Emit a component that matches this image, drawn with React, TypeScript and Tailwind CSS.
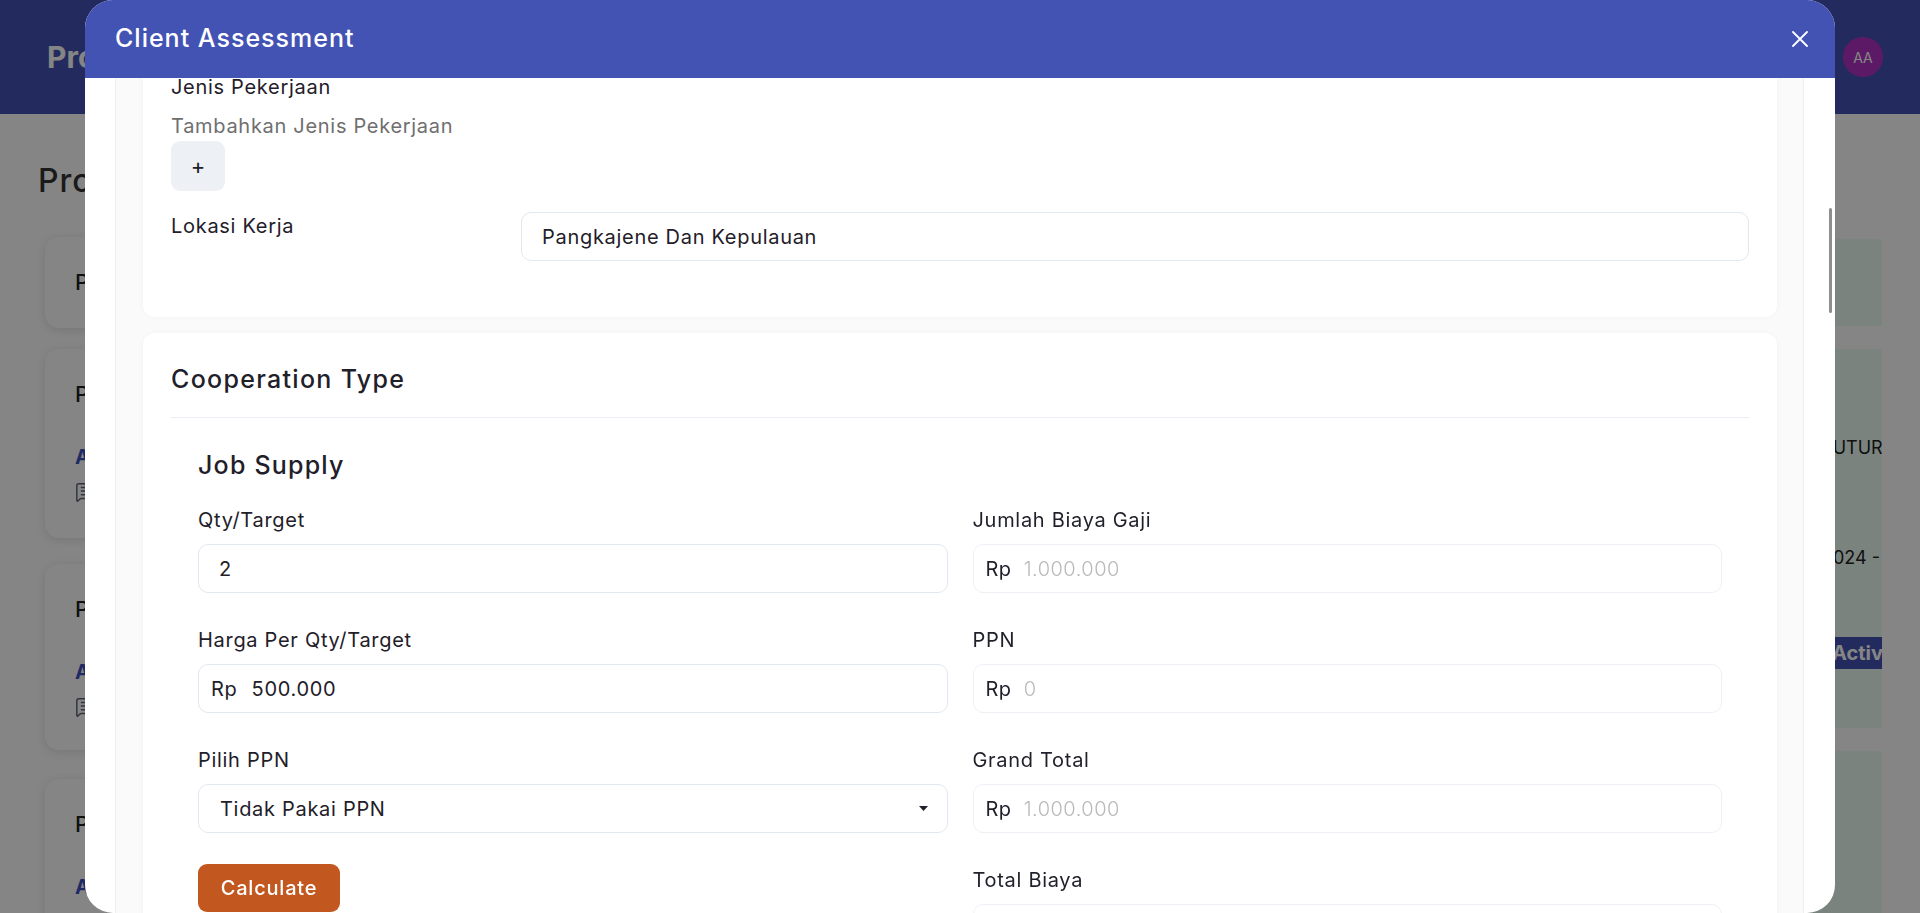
import React from "react";
import { MessageSquareText } from "lucide-react";

const FONT = "font-['Inter','Noto_Sans',sans-serif]";

function Label({ children }: { children: React.ReactNode }) {
  return (
    <div className="mb-[10px] text-[20px] leading-[28px] tracking-[0.7px] text-[#1f2029]">
      {children}
    </div>
  );
}

function TextInput({ value }: { value: string }) {
  return (
    <div className="flex h-[49px] items-center rounded-[10px] border border-[#e2e8f0] bg-white px-[20px] text-[20px] tracking-[0.7px] text-[#1f2029]">
      {value}
    </div>
  );
}

function MoneyInput({
  value,
  muted,
}: {
  value: string;
  muted?: boolean;
}) {
  return (
    <div
      className={
        muted
          ? "flex h-[49px] items-center gap-[12px] rounded-[10px] border border-[#edf0f5] bg-white pl-[12px] text-[20px] tracking-[0.5px]"
          : "flex h-[49px] items-center gap-[14px] rounded-[10px] border border-[#e2e8f0] bg-white pl-[12px] text-[20px] tracking-[0.7px]"
      }
    >
      <span className="text-[#1f2029]">Rp</span>
      <span className={muted ? "font-light text-[#b9b9b9]" : "text-[#1f2029]"}>
        {value}
      </span>
    </div>
  );
}

function LeftCard({
  title,
  link,
  h,
}: {
  title: string;
  link?: string;
  h: string;
}) {
  return (
    <div className={`${h} rounded-[14px] bg-white pl-[30px] pt-[30px] shadow-[0_2px_10px_rgba(0,0,0,0.12)]`}>
      <div className="text-[22px] font-medium leading-[30px] text-[#222]">{title}</div>
      {link && (
        <>
          <div className="mt-[34px] text-[20px] font-bold leading-[28px] text-[#3d4fc0]">
            {link}
          </div>
          <MessageSquareText className="mt-[10px] h-[22px] w-[22px] text-[#5b6478]" strokeWidth={1.6} />
        </>
      )}
    </div>
  );
}

function Backdrop() {
  return (
    <div className="h-[913px] overflow-hidden bg-white">
      <nav className="flex h-[114px] items-center justify-between bg-[#4353b4] pl-[47px] pr-[37px]">
        <span className="text-[30px] font-bold text-white">ProHire</span>
        <div className="flex h-[40px] w-[40px] items-center justify-center rounded-full bg-[#b132c4] text-[14px] text-white">
          AA
        </div>
      </nav>
      <main className="px-[38px] pt-[47px]">
        <h1 className="text-[32px] font-medium leading-[40px] tracking-[1px] text-[#333]">
          Project List
        </h1>
        <div className="mt-[36px] flex gap-[24px]">
          <div className="flex flex-1 flex-col pl-[7px]">
            <LeftCard title="Project Overview" h="h-[91px]" />
            <div className="mt-[21px]">
              <LeftCard title="PT Sinar Jaya" link="Assessment" h="h-[189px]" />
            </div>
            <div className="mt-[26px]">
              <LeftCard title="PT Maju Bersama" link="Assessment" h="h-[186px]" />
            </div>
            <div className="mt-[29px]">
              <LeftCard title="PT Karya Abadi" link="Assessment" h="h-[186px]" />
            </div>
          </div>
          <div className="flex w-[380px] shrink-0 flex-col pt-[2px]">
            <div className="h-[87px] bg-[#ecfcf4]" />
            <div className="mt-[23px] h-[379px] overflow-hidden whitespace-nowrap bg-[#ecfcf4] pl-[320px] pt-[85px] text-[18px] text-[#222]">
              <div className="leading-[28px]">FUTURE TECH</div>
              <div className="mt-[82px] leading-[28px]">2024 - 2025</div>
              <div className="-ml-[6px] mt-[65px] inline-flex h-[32px] items-center bg-[#4353b4] px-[16px] text-[20px] font-bold text-white">
                Active
              </div>
            </div>
            <div className="mt-[23px] h-[200px] bg-[#ecfcf4]" />
          </div>
        </div>
      </main>
    </div>
  );
}

export default function App() {
  return (
    <div className={`relative h-[913px] w-full overflow-hidden ${FONT}`}>
      <Backdrop />
      <div className="fixed inset-0 z-10 bg-black/[0.48]" />
      <div className="fixed inset-0 z-20 flex justify-center px-[85px]">
        <div className="flex h-[913px] w-full flex-col overflow-hidden rounded-[28px] bg-white">
          <header className="flex h-[78px] shrink-0 items-center justify-between bg-[#4353b4] pl-[30px] pr-[27px]">
            <h2 className="text-[25px] font-medium tracking-[1px] text-white">
              Client Assessment
            </h2>
            <svg width="16" height="16" viewBox="0 0 16 16" fill="none" stroke="white" strokeWidth="1.8" strokeLinecap="round">
              <path d="M1 1 15 15M15 1 1 15" />
            </svg>
          </header>
          <div className="relative flex-1 overflow-hidden pl-[30px] pr-[31px]">
            <div className="-mt-[61px] border-x border-[#efefef] bg-[#fafafa] pl-[27px] pr-[26px] pt-[28px]">
              {/* Card 1 */}
              <div className="rounded-[12px] bg-white px-[28px] pb-[56px] pt-[28px] shadow-[0_0_6px_rgba(0,0,0,0.03)]">
                <div className="text-[20px] leading-[28px] tracking-[0.7px] text-[#1f2029]">
                  Jenis Pekerjaan
                </div>
                <div className="mt-[11px] text-[20px] leading-[28px] tracking-[0.7px] text-[#6f6f6f]">
                  Tambahkan Jenis Pekerjaan
                </div>
                <button className="mt-[1px] flex h-[50px] w-[54px] items-center justify-center rounded-[9px] bg-[#edf1f6] text-[22px] text-[#1f2029]">
                  +
                </button>
                <div className="mt-[21px] flex items-start">
                  <div className="w-[350px] text-[20px] leading-[28px] tracking-[0.7px] text-[#1f2029]">
                    Lokasi Kerja
                  </div>
                  <div className="flex-1">
                    <TextInput value="Pangkajene Dan Kepulauan" />
                  </div>
                </div>
              </div>

              {/* Card 2 */}
              <div className="mt-[16px] h-[700px] rounded-[12px] bg-white px-[28px] pt-[28px] shadow-[0_0_6px_rgba(0,0,0,0.03)]">
                <div className="border-b border-[#eceef3] pb-[20px] text-[25px] font-medium leading-[36px] tracking-[1.3px] text-[#1f2029]">
                  Cooperation Type
                </div>
                <div className="px-[27px] pt-[31px]">
                  <div className="text-[25px] font-medium leading-[32px] tracking-[1.2px] text-[#1f2029]">
                    Job Supply
                  </div>
                  <div className="mt-[25px] grid grid-cols-2 gap-x-[25px]">
                    <div className="flex flex-col gap-[33px]">
                      <div>
                        <Label>Qty/Target</Label>
                        <TextInput value="2" />
                      </div>
                      <div>
                        <Label>Harga Per Qty/Target</Label>
                        <MoneyInput value="500.000" />
                      </div>
                      <div>
                        <Label>Pilih PPN</Label>
                        <div className="flex h-[49px] items-center justify-between rounded-[10px] border border-[#e2e8f0] bg-white pl-[21px] pr-[19px] text-[20px] tracking-[0.7px] text-[#1f2029]">
                          <span>Tidak Pakai PPN</span>
                          <svg width="9" height="5" viewBox="0 0 9 5">
                            <path d="M0 0H9L4.5 5Z" fill="#1f2029" />
                          </svg>
                        </div>
                      </div>
                      <button className="-mt-[2px] flex h-[48px] w-[142px] items-center justify-center rounded-[9px] bg-[#c2581f] text-[20px] font-medium tracking-[0.8px] text-white">
                        Calculate
                      </button>
                    </div>
                    <div className="flex flex-col gap-[33px]">
                      <div>
                        <Label>Jumlah Biaya Gaji</Label>
                        <MoneyInput value="1.000.000" muted />
                      </div>
                      <div>
                        <Label>PPN</Label>
                        <MoneyInput value="0" muted />
                      </div>
                      <div>
                        <Label>Grand Total</Label>
                        <MoneyInput value="1.000.000" muted />
                      </div>
                      <div>
                        <Label>Total Biaya</Label>
                        <MoneyInput value="1.000.000" muted />
                      </div>
                    </div>
                  </div>
                </div>
              </div>
            </div>
            <div className="absolute right-[3px] top-[130px] h-[105px] w-[3px] rounded-full bg-[#8f8f8f]" />
          </div>
        </div>
      </div>
    </div>
  );
}
